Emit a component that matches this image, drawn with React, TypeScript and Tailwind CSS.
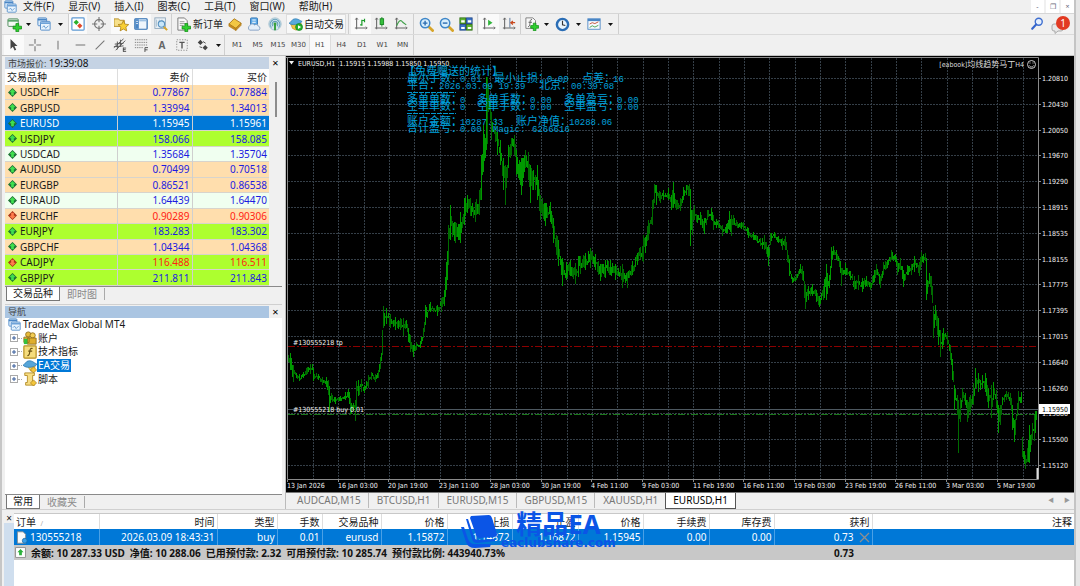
import type { ReactNode } from 'react';

type Icon = { children: ReactNode; size?: string };

function Svg({ children, size = 'size-[14px]' }: Icon) {
  return (
    <svg viewBox="0 0 16 16" className={`${size} shrink-0`} aria-hidden="true">
      {children}
    </svg>
  );
}

const PLUS = 'M9.5 7h3v2.8h3v3h-3v2.9h-3v-2.9h-3v-3h3z';

function PlusMark() {
  return <path d={PLUS} fill="#2fd02f" stroke="#0d8a12" strokeWidth=".8" />;
}

function WindowsIcon({ size }: { size?: string }) {
  return (
    <Svg size={size}>
      <rect x="1" y="1" width="10" height="9" rx="1" fill="#dcecfb" stroke="#4a86c5" />
      <path d="M1 3h10" stroke="#4a86c5" strokeWidth="2" />
      <rect x="4" y="5" width="11" height="10" rx="1" fill="#e9f4fd" stroke="#4a86c5" />
      <path d="M4 7h11" stroke="#6ea3d8" strokeWidth="2" />
      <path d="M6 12l2-2 2 3 3-3" fill="none" stroke="#5a93cc" />
    </Svg>
  );
}

function Axes() {
  return (
    <>
      <path d="M3 1v13M1 12.5h14" fill="none" stroke="#666" strokeWidth="1.2" />
      <path d="M1.500 3L3 1l1.500 2M13.500 11l1.500 1.500-1.500 1.500" fill="none" stroke="#666" />
    </>
  );
}

function Magnifier({ minus }: { minus?: boolean }) {
  return (
    <Svg size="size-[15px]">
      <path d="M10 10l4.500 4.500" stroke="#d7a52a" strokeWidth="3" strokeLinecap="round" />
      <circle cx="6.500" cy="6.500" r="5" fill="#d8effc" stroke="#3f87c8" strokeWidth="1.600" />
      <path d={minus ? 'M4 6.500h5' : 'M4 6.500h5M6.500 4v5'} stroke="#2b6cb0" strokeWidth="1.500" />
    </Svg>
  );
}

const icons = {
  newChart: (
    <Svg size="size-[15px]">
      <rect x="1" y="2" width="11" height="8" rx="1" fill="#f4faf4" stroke="#4d8a5b" />
      <path d="M1 4h11" stroke="#5aa56b" strokeWidth="2" />
      <PlusMark />
    </Svg>
  ),
  market: (
    <Svg>
      <rect x="1" y="1" width="14" height="14" rx="1" fill="#fff" stroke="#5f9ad4" strokeWidth="1.400" />
      <path d="M6 3l3 3-3 3-3-3z" fill="#2bb02b" />
      <path d="M10 7l3 3-3 3-3-3z" fill="#e0492a" />
    </Svg>
  ),
  target: (
    <Svg>
      <circle cx="8" cy="8" r="5" fill="none" stroke="#777" strokeWidth="1.500" />
      <path d="M8 0v6M8 10v6M0 8h6M10 8h6" stroke="#777" strokeWidth="1.300" />
    </Svg>
  ),
  folderStar: (
    <Svg size="size-[15px]">
      <path d="M0 2h5l1 1.500h5V10H0z" fill="#f7e08a" stroke="#b58e25" />
      <path d="M10 4l1.700 3.600 4 .5-3 2.700.8 4-3.500-2-3.500 2 .8-4-3-2.700 4-.5z" fill="#f8cf35" stroke="#a87c14" strokeWidth=".8" />
    </Svg>
  ),
  panel: (
    <Svg>
      <rect x="1" y="2" width="14" height="12" rx="1" fill="#eef5fc" stroke="#2d6cb0" strokeWidth="1.400" />
      <path d="M1.500 2.500h4v11h-4z" fill="#4a86c5" />
      <path d="M6 4h8" stroke="#9dc0e3" strokeWidth="2" />
      <path d="M2.500 5h2M2.500 7.500h2" stroke="#fff" />
    </Svg>
  ),
  tester: (
    <Svg>
      <rect x="1" y="1" width="12" height="12" fill="#eef4f8" stroke="#8aa4b8" />
      <path d="M3 3v8M6 3v8M9 3v8" stroke="#9fb6c8" />
      <path d="M11 11l4 4" stroke="#d7a52a" strokeWidth="2.400" />
      <circle cx="8.500" cy="8" r="3.600" fill="#c9e6f8" stroke="#5590bf" strokeWidth="1.200" />
    </Svg>
  ),
  order: (
    <Svg size="size-[15px]">
      <path d="M2 1h7l3 3v10H2z" fill="#f8f8f8" stroke="#777" />
      <path d="M4 5h5M4 7h6M4 9h4" stroke="#999" />
      <PlusMark />
    </Svg>
  ),
  goldBook: (
    <Svg>
      <path d="M1 8l6-6 8 5-6 6z" fill="#f2c743" stroke="#a87415" />
      <path d="M1 8l8 5v2.500l-8-5zM9 13l6-6v2.500l-6 6z" fill="#c98d1e" stroke="#a87415" strokeWidth=".6" />
    </Svg>
  ),
  cloud: (
    <Svg>
      <rect x="4" y="1" width="8" height="8" rx="1" fill="#5ba7e6" stroke="#2e74b5" />
      <path d="M6 3.500h4M6 6h4" stroke="#fff" strokeWidth="1.200" />
      <path d="M3 15a3 3 0 010-5 3.200 3.200 0 015.500-1 3 3 0 014.500 1.500A2.300 2.300 0 0113 15z" fill="#e4eef9" stroke="#7e9cc0" />
    </Svg>
  ),
  signal: (
    <Svg>
      <circle cx="8" cy="8" r="7" fill="#d3e6ee" stroke="#9cbccb" />
      <path d="M4 12a5.500 5.500 0 118 0M5.800 10.500a3.200 3.200 0 114.400 0" fill="none" stroke="#5f9db8" strokeWidth="1.200" />
      <path d="M8 8v7" stroke="#37a03c" strokeWidth="2.200" />
      <circle cx="8" cy="8" r="1.700" fill="#37a03c" />
    </Svg>
  ),
  auto: (
    <Svg>
      <path d="M2 8l12-1-2 6-4 2-4-2z" fill="#f0c545" stroke="#b48820" strokeWidth=".7" />
      <path d="M0 7c3-1 3-5 7-5s5 2 8 3c-3 4-12 5-15 2z" fill="#58a9dc" stroke="#2b77ad" strokeWidth=".7" />
      <circle cx="11.500" cy="11.500" r="4" fill="#27b12d" stroke="#0c7f14" strokeWidth=".7" />
      <path d="M10.300 9.300l3.500 2.200-3.500 2.200z" fill="#fff" />
    </Svg>
  ),
  bars: (
    <Svg>
      <Axes />
      <path d="M9 3v7M7 9h2M9 4h3M12 2v4" fill="none" stroke="#1d9c2b" strokeWidth="1.400" />
    </Svg>
  ),
  candles: (
    <Svg>
      <Axes />
      <path d="M9 0v11" stroke="#12831d" />
      <rect x="7" y="2" width="4" height="6.500" fill="#35c03c" stroke="#12831d" />
    </Svg>
  ),
  line: (
    <Svg>
      <Axes />
      <path d="M3 10c3-7 5-7 7-4l4 3" fill="none" stroke="#3f9f49" strokeWidth="1.300" />
    </Svg>
  ),
  zoomIn: <Magnifier />,
  zoomOut: <Magnifier minus />,
  tile: (
    <Svg>
      <rect x="1" y="1" width="6.500" height="6.500" fill="#5cb531" stroke="#33701a" />
      <rect x="8.500" y="1" width="6.500" height="6.500" fill="#3b74c9" stroke="#23498a" />
      <rect x="1" y="8.500" width="6.500" height="6.500" fill="#3b74c9" stroke="#23498a" />
      <rect x="8.500" y="8.500" width="6.500" height="6.500" fill="#5cb531" stroke="#33701a" />
      <path d="M2.500 5h4M10 5h4M2.500 12.500h4M10 12.500h4" stroke="#fff" strokeWidth="2.400" />
    </Svg>
  ),
  scroll: (
    <Svg>
      <Axes />
      <path d="M7 3l5 3.500L7 10z" fill="#31b43b" />
    </Svg>
  ),
  shift: (
    <Svg>
      <Axes />
      <path d="M9 1v11" stroke="#4d6c94" />
      <path d="M15 6.500h-5M12.500 4.500l-2.500 2 2.500 2" fill="none" stroke="#c8481e" strokeWidth="1.300" />
    </Svg>
  ),
  indicators: (
    <Svg>
      <path d="M1 1h8l3 3v9H1z" fill="#f8f8f8" stroke="#777" />
      <path d="M8 3c-2-.5-2 1-2.300 4S5 11 3.500 11M4 6h4" fill="none" stroke="#555" />
      <PlusMark />
    </Svg>
  ),
  clock: (
    <Svg size="size-[15px]">
      <circle cx="8" cy="8" r="6" fill="#e8f4fd" stroke="#2a6db5" strokeWidth="2.600" />
      <path d="M8 4v4.300l3 .7" fill="none" stroke="#333" strokeWidth="1.200" />
    </Svg>
  ),
  template: (
    <Svg>
      <rect x="1" y="2" width="14" height="12" fill="#f6fafd" stroke="#4a86c5" />
      <path d="M1 3.500h14" stroke="#4a86c5" strokeWidth="2.400" />
      <path d="M3 8l3-1.500 3 1 4-2" fill="none" stroke="#c2452b" />
      <path d="M3 12l3-2 3 1.500 4-2" fill="none" stroke="#3a9b42" />
    </Svg>
  ),
  cursor: (
    <Svg>
      <path d="M4 1l8 8H8.500l2 4.500-1.800.9-2-4.500L4 12.500z" fill="#444" />
    </Svg>
  ),
  cross: (
    <Svg>
      <path d="M8 1v5.500M8 9.500V15M1 8h5.500M9.500 8H15" stroke="#777" strokeWidth="1.300" />
    </Svg>
  ),
  vline: (
    <Svg>
      <path d="M8 3v10" stroke="#777" strokeWidth="1.200" />
    </Svg>
  ),
  hline: (
    <Svg>
      <path d="M3 8h11" stroke="#777" strokeWidth="1.200" />
    </Svg>
  ),
  trend: (
    <Svg>
      <path d="M3 13L13 3" stroke="#777" strokeWidth="1.200" />
    </Svg>
  ),
  channel: (
    <Svg>
      <path d="M1 11L12 1M3 14L14 3M2 7l10-1M1 10l11-1M5 4v9M8.500 2v8" stroke="#555" strokeWidth="1.100" />
      <path d="M11.500 11.500h3.500M11.500 13.300h3M11.500 15.300h3.500M11.800 11v4.500" stroke="#444" />
    </Svg>
  ),
  fibo: (
    <Svg>
      <path d="M1 2h14M1 5h14M1 8h14M1 11h9" stroke="#777" strokeDasharray="1.500 1" />
      <path d="M12.500 16v-5H16M12.500 13.500h3" fill="none" stroke="#444" />
    </Svg>
  ),
  label: (
    <Svg>
      <rect x="2" y="2" width="12" height="12" fill="none" stroke="#888" strokeDasharray="1.500 1.500" />
      <path d="M5 5h6M8 5v7" stroke="#555" strokeWidth="1.600" />
    </Svg>
  ),
  arrows: (
    <Svg>
      <path d="M5 2l3 3-3 3-3-3zM10.500 8l3 3-3 3-3-3z" fill="#444" />
      <path d="M8 4l3 2M4 10l3 1" stroke="#444" />
    </Svg>
  ),
  search: (
    <Svg>
      <circle cx="10" cy="5.500" r="4" fill="#e5effd" stroke="#3f6fd0" strokeWidth="1.600" />
      <path d="M7 8.500L2.500 13.500" stroke="#3565cc" strokeWidth="2.400" strokeLinecap="round" />
    </Svg>
  ),
};

function Tool({ icon, name, width = 'w-5', on }: { icon: ReactNode; name: string; width?: string; on?: boolean }) {
  return (
    <button
      type="button"
      aria-label={name}
      className={`flex h-full shrink-0 items-center justify-center ${width} ${on ? 'bg-[#fafafa]' : ''}`}
    >
      {icon}
    </button>
  );
}

function Caret() {
  return (
    <button type="button" aria-label="更多" className="flex h-full w-2 shrink-0 items-center justify-center">
      <svg viewBox="0 0 5 3" className="h-[3px] w-[5px]">
        <path d="M0 0h5L2.500 3z" fill="#111" />
      </svg>
    </button>
  );
}

function Sep({ space = 'mx-px' }: { space?: string }) {
  return <span className={`h-full w-px shrink-0 bg-[#cfcfcf] ${space}`} />;
}

const MENUS = ['文件(F)', '显示(V)', '插入(I)', '图表(C)', '工具(T)', '窗口(W)', '帮助(H)'];
const FRAMES = ['M1', 'M5', 'M15', 'M30', 'H1', 'H4', 'D1', 'W1', 'MN'];

function MenuBar() {
  return (
    <nav className="flex h-[14px] items-center border-b border-[#d6d6d6] pl-[2px]">
      <WindowsIcon size="size-[13px]" />
      <div className="ml-[6px] flex gap-[14px] text-[10px] leading-[13px]">
        {MENUS.map((m) => (
          <button key={m} type="button">
            {m}
          </button>
        ))}
      </div>
      <div className="ml-auto flex gap-[2px] text-[7px] leading-[13px] text-[#667]">
        <button type="button" aria-label="最小化" className="h-[13px] w-[13px] bg-white">-</button>
        <button type="button" aria-label="还原" className="h-[13px] w-[13px] bg-white">❐</button>
        <button type="button" aria-label="关闭" className="h-[13px] w-[13px] bg-white">×</button>
      </div>
    </nav>
  );
}

function Toolbars() {
  return (
    <div className="border-b border-[#c2c2c2]">
      <div className="flex h-[21px] items-center border-b border-[#dadada] pl-[2px]">
        <Tool icon={icons.newChart} name="新图表" />
        <Caret />
        <Tool icon={<WindowsIcon />} name="配置文件" width="w-6" />
        <Caret />
        <Sep space="ml-1" />
        <Tool icon={icons.market} name="市场报价" width="w-[18px]" on />
        <Tool icon={icons.target} name="数据窗口" width="w-6" />
        <Tool icon={icons.folderStar} name="导航" on />
        <Tool icon={icons.panel} name="终端" on />
        <Tool icon={icons.tester} name="策略测试" />
        <Sep space="mx-0" />
        <button type="button" className="flex h-full w-[54px] shrink-0 items-center gap-[2px] pl-1 text-[10px] whitespace-nowrap">
          {icons.order}
          新订单
        </button>
        <Tool icon={icons.goldBook} name="MetaEditor" width="w-[18px]" />
        <Tool icon={icons.cloud} name="VPS" />
        <Tool icon={icons.signal} name="信号" width="w-[22px]" />
        <button type="button" className="flex h-full w-[60px] shrink-0 items-center gap-px border border-[#ddd] bg-[#f8f8f8] pl-[2px] text-[10px] whitespace-nowrap">
          {icons.auto}
          自动交易
        </button>
        <Sep space="mx-[2px]" />
        <Tool icon={icons.bars} name="柱状图" on />
        <Tool icon={icons.candles} name="蜡烛图" />
        <Tool icon={icons.line} name="折线图" />
        <Sep space="mx-[2px]" />
        <Tool icon={icons.zoomIn} name="放大" />
        <Tool icon={icons.zoomOut} name="缩小" />
        <Tool icon={icons.tile} name="平铺窗口" />
        <Sep />
        <Tool icon={icons.scroll} name="自动滚动" on />
        <Tool icon={icons.shift} name="图表平移" />
        <Sep />
        <Tool icon={icons.indicators} name="指标" />
        <Caret />
        <Tool icon={icons.clock} name="时间周期" width="w-6" />
        <Caret />
        <Tool icon={icons.template} name="模板" width="w-6" />
        <Caret />
        <Sep space="ml-1" />
        <div className="ml-auto flex h-full items-center gap-[6px] pr-[3px]">
          <Tool icon={icons.search} name="搜索" width="w-4" />
          <button type="button" aria-label="通知" className="relative h-5 w-5">
            <svg viewBox="0 0 20 20" className="size-5">
              <path d="M3 10h7a2 2 0 012 2v3a2 2 0 01-2 2H7l-3 2.500V17H3a2 2 0 01-2-2v-3a2 2 0 012-2z" fill="#e8e8e8" stroke="#aaa" />
              <circle cx="12" cy="9" r="7" fill="#e23a22" />
            </svg>
            <span className="absolute top-[2px] right-[5px] text-[10px] leading-[14px] text-white">1</span>
          </button>
        </div>
      </div>
      <div className="flex h-[20px] items-center pl-[2px]">
        <Tool icon={icons.cursor} name="光标" on />
        <Tool icon={icons.cross} name="十字线" width="w-[22px]" />
        <Tool icon={icons.vline} name="垂直线" width="w-6" />
        <Tool icon={icons.hline} name="水平线" />
        <Tool icon={icons.trend} name="趋势线" />
        <Tool icon={icons.channel} name="通道" />
        <Tool icon={icons.fibo} name="斐波那契" width="w-[22px]" />
        <button type="button" className="w-5 shrink-0 text-[10px] font-bold text-[#666]">A</button>
        <Tool icon={icons.label} name="标签" />
        <Tool icon={icons.arrows} name="箭头" width="w-[22px]" />
        <Caret />
        <Sep space="mx-[2px]" />
        <div className="flex h-full w-[186px] shrink-0 font-['DejaVu_Sans'] text-[7px] text-[#444]">
          {FRAMES.map((f) => (
            <button key={f} type="button" className={f === 'H1' ? 'flex-1 border-x border-[#ddd] bg-[#fafafa]' : 'flex-1'}>
              {f}
            </button>
          ))}
        </div>
        <Sep space="mx-0" />
      </div>
    </div>
  );
}

type Quote = { pair: string; bid: string; ask: string; tint: string; down?: boolean; selected?: boolean };

const PEACH = 'bg-[#ffdead]';
const LIME = 'bg-[#adff2f]';
const MINT = 'bg-[#f0fff0]';

const QUOTES: Quote[] = [
  { pair: 'USDCHF', bid: '0.77867', ask: '0.77884', tint: PEACH },
  { pair: 'GBPUSD', bid: '1.33994', ask: '1.34013', tint: PEACH },
  { pair: 'EURUSD', bid: '1.15945', ask: '1.15961', tint: 'bg-[#0078d7]', selected: true },
  { pair: 'USDJPY', bid: '158.066', ask: '158.085', tint: LIME },
  { pair: 'USDCAD', bid: '1.35684', ask: '1.35704', tint: MINT },
  { pair: 'AUDUSD', bid: '0.70499', ask: '0.70518', tint: PEACH },
  { pair: 'EURGBP', bid: '0.86521', ask: '0.86538', tint: PEACH },
  { pair: 'EURAUD', bid: '1.64439', ask: '1.64470', tint: MINT },
  { pair: 'EURCHF', bid: '0.90289', ask: '0.90306', tint: PEACH, down: true },
  { pair: 'EURJPY', bid: '183.283', ask: '183.302', tint: LIME },
  { pair: 'GBPCHF', bid: '1.04344', ask: '1.04368', tint: PEACH },
  { pair: 'CADJPY', bid: '116.488', ask: '116.511', tint: LIME, down: true },
  { pair: 'GBPJPY', bid: '211.811', ask: '211.843', tint: LIME },
];

function TickArrow({ down }: { down?: boolean }) {
  return (
    <svg viewBox="0 0 10 10" className="size-[9px] shrink-0">
      <path d="M5 0l5 5-5 5-5-5z" fill={down ? '#a83216' : '#1c6b34'} />
      {down ? (
        <path d="M5 9L1.500 5.200h2V2h3v3.200h2z" fill="#ff7d4d" />
      ) : (
        <path d="M5 1l3.500 3.800h-2V8h-3V4.800h-2z" fill="#3fe04f" />
      )}
    </svg>
  );
}

function PanelTitle({ children, tint }: { children: ReactNode; tint: string }) {
  return (
    <div className="flex h-[12px] items-center text-[9px] leading-[12px]">
      <h2 className={`h-full flex-1 pl-[3px] text-[#444] ${tint}`}>{children}</h2>
      <button type="button" aria-label="关闭" className="w-[13px] text-[11px] leading-[12px] text-black">×</button>
    </div>
  );
}

function PanelTabs({ tabs }: { tabs: string[] }) {
  return (
    <div className="flex h-[15px] border-t border-[#8a8a8a] text-[10px] leading-[13px]">
      <button type="button" className="ml-px border-x border-b border-[#777] bg-white px-[6px]">{tabs[0]}</button>
      <button type="button" className="my-px border-r border-[#aaa] px-[7px] text-[#8a8a8a]">{tabs[1]}</button>
    </div>
  );
}

function MarketWatch() {
  return (
    <section className="pt-px">
      <PanelTitle tint="bg-[#c5d3e4]">
        市场报价: <span className="text-[10px] text-[#111]">19:39:08</span>
      </PanelTitle>
      <div className="flex">
        <table className="h-[217px] flex-1 table-fixed border-collapse bg-white text-[10px] leading-[14px]">
          <thead>
            <tr className="h-[16px]">
              <th className="w-[112px] border-r border-[#ddd] p-0 pl-[2px] text-left font-normal">交易品种</th>
              <th className="w-[75px] border-r border-[#ddd] p-0 pr-[2px] text-right font-normal">卖价</th>
              <th className="p-0 pr-[2px] text-right font-normal">买价</th>
            </tr>
          </thead>
          <tbody>
            {QUOTES.map((q) => {
              const price = q.selected ? 'text-white' : q.down ? 'text-[#ff2414]' : 'text-[#1c1ce0]';
              return (
                <tr key={q.pair} className={`border-b border-[#d8d4cc] ${q.tint}`}>
                  <td className="border-r border-[#cfcfcf] p-0">
                    <div className={`flex items-center gap-[3px] pl-[3px] ${q.selected ? 'text-white' : 'text-[#1a1a1a]'}`}>
                      <TickArrow down={q.down} />
                      {q.pair}
                    </div>
                  </td>
                  <td className={`border-r border-[#cfcfcf] p-0 pr-[2px] text-right ${price}`}>{q.bid}</td>
                  <td className={`p-0 pr-[2px] text-right ${price}`}>{q.ask}</td>
                </tr>
              );
            })}
          </tbody>
        </table>
        <div className="w-[13px] pt-[13px]">
          <div className="mx-auto h-[35px] w-[2px] bg-[#8c8c8c]" />
        </div>
      </div>
      <PanelTabs tabs={['交易品种', '即时图']} />
    </section>
  );
}

const TREE = [
  {
    name: '账户',
    icon: (
      <Svg>
        <circle cx="6" cy="4" r="3" fill="#e8bb3a" stroke="#94701a" />
        <circle cx="11" cy="5" r="3" fill="#f2cd55" stroke="#94701a" />
        <path d="M5 15V8h10v7zM1 13V7h6v6z" fill="#dfae2c" stroke="#94701a" />
        <path d="M1 9h4v6H1z" fill="#35c03c" />
      </Svg>
    ),
  },
  {
    name: '技术指标',
    icon: (
      <Svg>
        <rect x="1" y="1" width="14" height="14" rx="1" fill="#f5dc7c" stroke="#b8901f" strokeWidth="1.400" />
        <path d="M11 4c-3-1-3 2-3.300 4S7 12.500 5 12M6 7h4.500" fill="none" stroke="#6b5210" strokeWidth="1.300" />
      </Svg>
    ),
  },
  {
    name: 'EA交易',
    selected: true,
    icon: (
      <Svg>
        <path d="M5 8l9-1-1 6-4 1z" fill="#f0cf58" stroke="#b48820" strokeWidth=".7" />
        <path d="M0 7c3-1 3-5 7-5s5 2 9 4c-3 4-13 5-16 1z" fill="#56a5d8" stroke="#2b77ad" strokeWidth=".8" />
        <path d="M12 9l3.500 3.500L12 16l-3.500-3.500z" fill="#f2c53b" stroke="#a5791a" strokeWidth=".8" />
      </Svg>
    ),
  },
  {
    name: '脚本',
    icon: (
      <Svg>
        <path d="M2 1h11v3h-2v8h2v3H3v-3h2V4H2z" fill="#f7dd83" stroke="#b18a24" />
        <path d="M12 9l3.500 3.500L12 16l-3.500-3.500z" fill="#f2c53b" stroke="#a5791a" strokeWidth=".8" />
      </Svg>
    ),
  },
];

function Navigator() {
  return (
    <section className="mt-[3px] flex flex-1 flex-col border-t border-[#d0d0d0] pt-px">
      <PanelTitle tint="bg-[#aac5e2]">导航</PanelTitle>
      <div className="flex-1 bg-white text-[10px] leading-[13px]">
        <ul className="flex h-[68px] flex-col">
          <li className="flex h-0 flex-1 items-center gap-[2px] pl-[3px]">
            <WindowsIcon size="size-[13px]" />
            TradeMax Global MT4
          </li>
          {TREE.map((n) => (
            <li key={n.name} className="flex h-0 flex-1 items-center pl-[5px]">
              <button type="button" aria-label={`展开${n.name}`}>
                <svg viewBox="0 0 8 8" className="size-2">
                  <rect x=".5" y=".5" width="7" height="7" fill="#fff" stroke="#aaa" />
                  <path d="M2 4h4M4 2v4" stroke="#345a9a" />
                </svg>
              </button>
              <span className="mr-px w-1 border-t border-dotted border-[#aaa]" />
              {n.icon}
              <span className={n.selected ? 'bg-[#0078d7] px-px text-white' : 'px-px'}>{n.name}</span>
            </li>
          ))}
        </ul>
      </div>
      <PanelTabs tabs={['常用', '收藏夹']} />
    </section>
  );
}

// [x, high, low] envelope of the hourly bars, in chart units
const RANGE: [number, number, number][] = [
  [288, 355, 362], [290, 353, 370], [293, 365, 382], [296, 373, 378], [299, 374, 381], [303, 372, 378], [307, 367, 374],
  [310, 364, 374], [312, 364, 370], [313, 370, 381], [318, 374, 380], [322, 377, 385], [326, 377, 387], [328, 380, 395],
  [329, 390, 412], [332, 395, 402], [335, 397, 404], [340, 396, 401], [345, 392, 400], [348, 389, 398], [350, 398, 415],
  [353, 403, 411], [355, 400, 421], [356, 381, 400], [358, 380, 396], [361, 379, 392], [364, 385, 393], [368, 375, 388],
  [371, 372, 380], [375, 374, 382], [378, 370, 378], [380, 357, 364], [382, 330, 355], [383, 306, 328], [386, 308, 324],
  [390, 314, 328], [395, 317, 330], [400, 318, 330], [403, 318, 336], [406, 320, 328], [408, 328, 342], [410, 335, 352],
  [413, 345, 357], [416, 342, 350], [420, 341, 348], [423, 328, 338], [425, 305, 322], [430, 302, 312], [437, 305, 316],
  [441, 298, 312], [444, 290, 306], [446, 262, 290], [448, 225, 265], [450, 205, 240], [455, 222, 243], [460, 212, 243],
  [464, 198, 225], [467, 195, 213], [470, 198, 216], [475, 202, 222], [479, 190, 215], [481, 155, 200], [483, 125, 172],
  [485, 138, 158], [486, 77, 150], [487, 77, 144], [488, 85, 112], [490, 103, 120], [491, 120, 140], [495, 118, 142],
  [497, 132, 155], [500, 140, 165], [503, 158, 190], [505, 165, 205], [508, 145, 165], [511, 138, 155], [514, 135, 155],
  [516, 152, 175], [519, 160, 180], [521, 158, 195], [525, 150, 168], [528, 152, 180], [530, 165, 203], [533, 170, 190],
  [537, 165, 200], [540, 195, 220], [545, 203, 226], [550, 202, 222], [553, 218, 243], [558, 240, 266], [562, 258, 286],
  [566, 262, 280], [570, 260, 276], [575, 263, 284], [578, 256, 277], [585, 253, 270], [590, 248, 268], [595, 254, 270],
  [600, 264, 281], [605, 260, 278], [610, 260, 275], [615, 264, 280], [622, 264, 288], [627, 272, 288], [632, 261, 275],
  [637, 253, 265], [643, 235, 262], [648, 220, 240], [652, 200, 225], [654, 184, 197], [656, 185, 205], [660, 192, 203],
  [663, 190, 200], [668, 188, 200], [671, 195, 210], [673, 182, 208], [676, 200, 210], [680, 198, 211], [683, 187, 200],
  [686, 185, 195], [689, 184, 196], [690, 200, 246], [692, 210, 235], [694, 205, 220], [697, 215, 223], [700, 212, 225],
  [704, 218, 234], [707, 210, 220], [711, 208, 220], [713, 215, 230], [718, 220, 228], [722, 225, 236], [727, 223, 233],
  [729, 211, 230], [731, 215, 236], [733, 215, 225], [737, 222, 228], [743, 222, 230], [748, 228, 238], [753, 232, 240],
  [757, 236, 243], [762, 238, 249], [764, 235, 250], [768, 245, 266], [770, 233, 245], [774, 232, 238], [778, 236, 243],
  [782, 238, 250], [785, 236, 250], [787, 250, 262], [789, 260, 276], [792, 277, 283], [796, 274, 280], [800, 264, 273],
  [802, 266, 280], [805, 285, 309], [808, 286, 300], [812, 284, 296], [816, 290, 302], [819, 296, 307], [823, 286, 300],
  [826, 264, 300], [829, 275, 288], [831, 247, 265], [833, 246, 255], [836, 250, 260], [839, 258, 267], [841, 268, 286],
  [845, 263, 275], [850, 271, 280], [854, 276, 290], [858, 275, 290], [862, 278, 292], [866, 276, 286], [870, 282, 290],
  [874, 270, 282], [876, 264, 275], [880, 276, 288], [883, 262, 275], [887, 260, 268], [891, 250, 260], [895, 254, 262],
  [897, 262, 275], [900, 258, 270], [903, 270, 287], [907, 265, 275], [911, 264, 275], [914, 256, 272], [919, 262, 276],
  [921, 252, 265], [925, 253, 261], [926, 280, 300], [929, 273, 284], [931, 276, 295], [933, 310, 338], [935, 305, 320],
  [938, 318, 345], [940, 330, 357], [943, 328, 345], [947, 332, 345], [950, 345, 360], [952, 360, 380], [954, 385, 410],
  [957, 395, 415], [958, 400, 453], [960, 398, 418], [962, 388, 402], [965, 393, 405], [967, 400, 422], [970, 395, 413],
  [973, 383, 405], [975, 368, 388], [978, 373, 392], [982, 375, 388], [985, 373, 392], [988, 388, 408], [991, 385, 418],
  [993, 382, 400], [996, 390, 408], [998, 405, 433], [1000, 405, 425], [1002, 397, 405], [1006, 391, 400],
  [1010, 393, 405], [1012, 405, 430], [1014, 420, 442], [1018, 391, 410], [1021, 392, 403], [1022, 437, 457],
  [1025, 455, 469], [1028, 440, 462], [1029, 425, 463], [1032, 423, 440], [1034, 415, 441], [1036, 406, 420],
];

// One vertical stroke per bar; a small seeded generator keeps the shape stable between renders
function buildBars() {
  let seed = 11;
  const rand = () => {
    seed = (seed * 16807) % 2147483647;
    return seed / 2147483647;
  };
  let bright = '';
  let dim = '';
  let prev = 358;
  let i = 0;
  for (let x = RANGE[0][0]; x <= 1036; x += 1) {
    while (i < RANGE.length - 2 && RANGE[i + 1][0] <= x) i += 1;
    const [x0, h0, l0] = RANGE[i];
    const [x1, h1, l1] = RANGE[i + 1];
    const k = (x - x0) / (x1 - x0);
    const hi = h0 + (h1 - h0) * k;
    const lo = l0 + (l1 - l0) * k;
    const span = lo - hi;
    let top = hi + span * rand() * 0.6;
    let bottom = lo - span * rand() * 0.6;
    if (x === x0) {
      top = hi;
      bottom = lo;
    }
    if (bottom < top + 2) bottom = top + 2;
    if (Math.abs(prev - top) < 30) {
      top = Math.min(top, prev);
      bottom = Math.max(bottom, prev);
    }
    prev = hi + span * (0.3 + rand() * 0.4);
    const bar = `M${x}.5 ${Math.round(top)}V${Math.round(bottom)}`;
    if (rand() > 0.5) bright += bar;
    else dim += bar;
  }
  return { bright, dim };
}

const BARS = buildBars();

const PRICES = [
  '1.20810', '1.20430', '1.20050', '1.19670', '1.19290', '1.18915', '1.18535', '1.18155',
  '1.17775', '1.17395', '1.17015', '1.16640', '1.16260', '1.15880', '1.15500', '1.15120',
];

const TIMES = [
  '13 Jan 2026', '16 Jan 03:00', '20 Jan 19:00', '23 Jan 11:00', '28 Jan 03:00', '30 Jan 19:00', '4 Feb 11:00', '9 Feb 03:00',
  '11 Feb 19:00', '16 Feb 11:00', '19 Feb 03:00', '23 Feb 19:00', '26 Feb 11:00', '3 Mar 03:00', '5 Mar 19:00',
];

const priceY = (i: number) => Math.round(78 + i * 25.8);
const gridX = (i: number) => Math.round(313 + i * 25.35);

type Stat = { y: number; parts: [number, string][] };

const STATS: Stat[] = [
  { y: 82, parts: [[407, '最小手数：'], [460, '0.01'], [494, '最小止损：'], [547, '0.00'], [582, '点差：'], [613, '16']] },
  { y: 89, parts: [[407, '平台：'], [439, '2026.03.09 19:39'], [539, '北京：'], [571, '00:39:08']] },
  { y: 103, parts: [[407, '多单单数：'], [460, '0'], [477, '多单手数：'], [530, '0.00'], [564, '多单盈亏：'], [617, '0.00']] },
  { y: 110, parts: [[407, '空单单数：'], [460, '0'], [477, '空单手数：'], [530, '0.00'], [564, '空单盈亏：'], [617, '0.00']] },
  { y: 125, parts: [[407, '账户金额：'], [460, '10287.33'], [516, '账户净值：'], [569, '10288.06']] },
  { y: 132, parts: [[407, '合计盈亏：'], [460, '0.00'], [493, 'Magic:'], [532, '6266616']] },
];

function Chart() {
  return (
    <svg viewBox="286 56 788 436" className="block w-full bg-black" role="img" aria-label="EURUSD,H1">
      <g stroke="#353f48" strokeDasharray="2 1" shapeRendering="crispEdges">
        {PRICES.map((p, i) => (
          <path key={p} d={`M288 ${priceY(i)}.5H1038`} />
        ))}
        {Array.from({ length: 29 }, (_, i) => (
          <path key={i} d={`M${gridX(i)}.5 58V479`} />
        ))}
      </g>
      <path d="M288 409.5H1038" stroke="#4d5860" />
      <path d="M288 346.5H1038" stroke="#8c0000" strokeDasharray="7 2 2 2" />
      <path d="M288 414.5H1038" stroke="#1c7a1c" strokeDasharray="7 2 2 2" />
      <g shapeRendering="crispEdges">
        <path d={BARS.dim} stroke="#006c00" />
        <path d={BARS.bright} stroke="#009a00" />
      </g>
      <path d="M286 57.5H1038.5V479.5H287.500V57" fill="none" stroke="#8a8a8a" />
      <path d="M1037.500 468V479" stroke="#ddd" strokeWidth="2" />

      <g className="font-['DejaVu_Sans_Condensed','DejaVu_Sans'] text-[7px]" fill="#f2f2f2">
        {PRICES.map((p, i) => (
          <g key={p}>
            <path d={`M1038 ${priceY(i)}.5h3`} stroke="#8a8a8a" />
            <text x="1042" y={priceY(i) + 3}>{p}</text>
          </g>
        ))}
        {TIMES.map((t, i) => (
          <g key={t}>
            <path d={`M${Math.round(287 + i * 50.7)}.5 480v2`} stroke="#8a8a8a" />
            <text x={Math.round(287 + i * 50.7)} y="488">{t}</text>
          </g>
        ))}
        <text x="293" y="345">#130555218 tp</text>
        <text x="293" y="412">#130555218 buy 0.01</text>
        <path d="M289 61h5l-2.500 3.500z" />
        <text x="298" y="66" xmlSpace="preserve">EURUSD,H1  1.15915 1.15988 1.15850 1.15950</text>
        <rect x="1039" y="404" width="31" height="10" fill="#fff" />
        <text x="1042" y="412" fill="#000">1.15950</text>
      </g>
      <text x="1024" y="67" textAnchor="end" fill="#ddd" className="font-['Noto_Sans','Noto_Sans_CJK_SC',sans-serif] text-[8px]">
        <tspan className="font-['DejaVu_Sans_Condensed'] text-[7px]">[eabook]</tspan>
        均线趋势马丁
        <tspan className="font-['DejaVu_Sans_Condensed'] text-[7px]">H4</tspan>
      </text>
      <g fill="none" stroke="#ddd" strokeWidth=".9">
        <circle cx="1031.500" cy="64.500" r="4" />
        <path d="M1029.300 65.500c1 2 3.400 2 4.400 0M1030 62.500v1M1033 62.500v1" />
      </g>

      <g fill="#00a0dc">
        <text x="404" y="75" className="font-['Noto_Sans_CJK_SC',sans-serif] text-[11px]">【免费赠送的统计】</text>
        {STATS.map((row) =>
          row.parts.map(([x, t]) => (
            <text
              key={`${row.y}-${x}`}
              x={x}
              y={row.y}
              className={
                /^[\w.: ]+$/.test(t)
                  ? "font-['Liberation_Mono',monospace] text-[9px]"
                  : "font-['Noto_Sans_CJK_SC',sans-serif] text-[11px]"
              }
            >
              {t}
            </text>
          )),
        )}
      </g>
      <path d="M407 92.500h49M407 113.500h49" stroke="#0098d0" strokeDasharray="5 1" />
    </svg>
  );
}

const CHART_TABS = ['AUDCAD,M15', 'BTCUSD,H1', 'EURUSD,M15', 'GBPUSD,M15', 'XAUUSD,H1'];

function ChartTabs() {
  return (
    <div className="flex h-[17px] items-start border-t border-[#777] text-[10px] leading-[15px] text-[#777]">
      <div className="flex pl-[3px]">
        {CHART_TABS.map((t) => (
          <button key={t} type="button" className="border-r border-[#bbb] pr-[7px] pl-2 last:border-r-0">
            {t}
          </button>
        ))}
      </div>
      <button type="button" className="h-[16px] border border-t-0 border-[#555] bg-white px-[7px] text-black">EURUSD,H1</button>
      <div className="ml-auto flex gap-[10px] pr-1 text-[6px] text-[#999]">
        <button type="button" aria-label="向左">◀</button>
        <button type="button" aria-label="向右">▶</button>
      </div>
    </div>
  );
}

const COLUMNS = [
  { head: '时间', cell: '2026.03.09 18:43:31', width: 'w-[118px]' },
  { head: '类型', cell: 'buy', width: 'w-[60px]' },
  { head: '手数', cell: '0.01', width: 'w-[45px]' },
  { head: '交易品种', cell: 'eurusd', width: 'w-[59px]' },
  { head: '价格', cell: '1.15872', width: 'w-[66px]' },
  { head: '止损', cell: '1.14872', width: 'w-[65px]' },
  { head: '止盈', cell: '1.16872', width: 'w-[66px]' },
  { head: '价格', cell: '1.15945', width: 'w-[65px]' },
  { head: '手续费', cell: '0.00', width: 'w-[66px]' },
  { head: '库存费', cell: '0.00', width: 'w-[65px]' },
];

function Watermark() {
  return (
    <div className="pointer-events-none absolute top-[-2px] left-[447px] flex gap-1 text-[#0b55e6]">
      <svg viewBox="0 0 36 34" className="mt-[2px] h-[34px] w-[36px]" fill="currentColor">
        <path d="M10 2L28 1q2 0 3 3l5 16q0 3-3 3l-14 1q-3 0-4-3L9 4z" />
        <path d="M5 5h2l6 18q1 3 4 3l17-1v2l-18 2q-4 0-5-4z" />
        <path d="M0 13h3l4 12q2 5 6 5h17l-1 3-15 1q-7 0-9-6z" />
      </svg>
      <div className="text-center font-bold">
        <div className="text-[26px] leading-[24px]">精品EA</div>
        <div className="font-['DejaVu_Sans'] text-[12px] leading-[14px]">eaclubshare.com</div>
      </div>
    </div>
  );
}

function Terminal() {
  return (
    <section className="flex flex-1 border-t border-[#d0d0d0] pt-[3px]">
      <div className="flex w-[12px] flex-col pl-[2px]">
        <button type="button" aria-label="关闭" className="h-[10px] text-[10px] leading-[9px]">×</button>
        <div className="flex-1 bg-[#cfdeee]" />
      </div>
      <div className="relative flex-1 border-t border-[#c8c8c8] bg-white">
        <table className="w-full table-fixed border-collapse text-[10px] leading-[14px]">
          <thead>
            <tr className="h-[15px]">
              <th className="w-[85px] border-r border-[#ddd] p-0 pl-[2px] text-left font-normal">
                订单 <span className="pl-[2px] text-[7px] leading-[7px] text-[#aaa]">/</span>
              </th>
              {COLUMNS.map((c, i) => (
                <th key={i} className={`border-r border-[#ddd] p-0 pr-[2px] text-right font-normal ${c.width}`}>
                  {c.head}
                </th>
              ))}
              <th className="w-[98px] border-r border-[#ddd] p-0 pr-[2px] text-right font-normal">获利</th>
              <th className="p-0 pr-[2px] text-right font-normal">注释</th>
            </tr>
          </thead>
          <tbody>
            <tr className="h-[16px] bg-[#0078d7] text-white">
              <td className="border-r border-[#4aa0e6] p-0">
                <div className="flex items-center gap-[2px] pl-px">
                  <Svg size="size-[13px]">
                    <path d="M3 1h7l3 3v11H3z" fill="#fafafa" stroke="#888" />
                    <circle cx="12" cy="12" r="3" fill="#3aa0e8" stroke="#1c6cab" />
                  </Svg>
                  130555218
                </div>
              </td>
              {COLUMNS.map((c, i) => (
                <td key={i} className="border-r border-[#4aa0e6] p-0 pr-[2px] text-right">
                  {c.cell}
                </td>
              ))}
              <td className="border-r border-[#4aa0e6] p-0 pr-[2px]">
                <div className="flex items-center justify-end gap-[5px]">
                  0.73
                  <button type="button" aria-label="平仓">
                    <svg viewBox="0 0 11 11" className="size-[11px]">
                      <path d="M1 1l9 9M10 1l-9 9" stroke="#8f8f8f" strokeWidth="1.300" />
                    </svg>
                  </button>
                </div>
              </td>
              <td />
            </tr>
            <tr className="h-[15px] bg-[#c8c8c8] font-bold text-[#111]">
              <td colSpan={11} className="p-0">
                <div className="flex items-center gap-[5px] pl-px whitespace-nowrap">
                  <Svg size="size-[11px]">
                    <rect x="1" y="1" width="14" height="14" fill="#fff" stroke="#777" />
                    <path d="M8 3l4.500 4.500H10V12H6V7.500H3.500z" fill="#2bb03a" />
                  </Svg>
                  <span>余额: 10 287.33 USD</span>
                  <span>净值: 10 288.06</span>
                  <span>已用预付款: 2.32</span>
                  <span>可用预付款: 10 285.74</span>
                  <span>预付款比例: 443940.73%</span>
                </div>
              </td>
              <td className="p-0 pr-[18px] text-right">0.73</td>
              <td />
            </tr>
          </tbody>
        </table>
        <Watermark />
      </div>
    </section>
  );
}

export default function App() {
  return (
    <div className="flex min-h-screen bg-[#f0f0f0] font-['Noto_Sans','Noto_Sans_CJK_SC',sans-serif] text-[#1a1a1a]">
      <div className="flex min-w-0 flex-1 flex-col border-l-2 border-[#c6c6c6]">
        <MenuBar />
        <Toolbars />
        <div className="flex">
          <aside className="flex w-[284px] shrink-0 flex-col border-r border-[#bbb] pr-[3px] pl-[3px]">
            <MarketWatch />
            <Navigator />
          </aside>
          <main className="min-w-0 flex-1">
            <Chart />
            <ChartTabs />
          </main>
        </div>
        <Terminal />
      </div>
      <div className="w-[6px] shrink-0 border-l-2 border-[#c4c4c4] bg-[#e6e6e6]" />
    </div>
  );
}
